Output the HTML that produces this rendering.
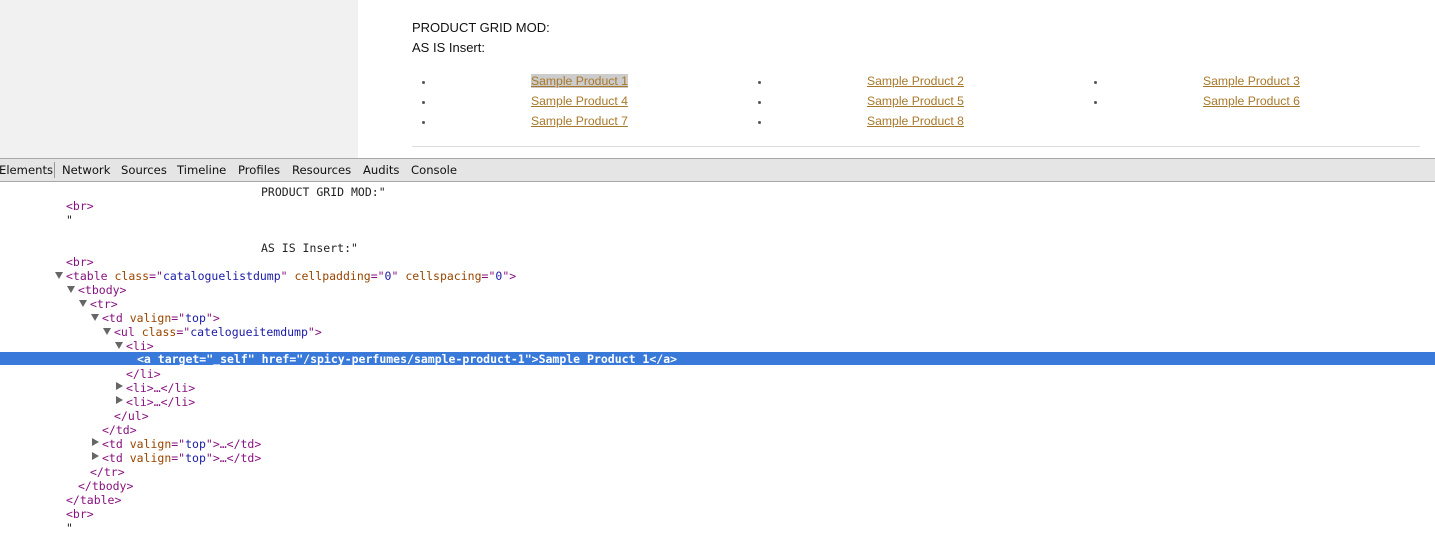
<!DOCTYPE html>
<html><head><meta charset="utf-8"><style>
*{margin:0;padding:0;box-sizing:border-box}
body{width:1435px;height:540px;overflow:hidden;background:#fff;position:relative;font-family:"Liberation Sans",Arial,sans-serif}
#left{position:absolute;left:0;top:0;width:358px;height:158px;background:#f1f1f1}
.t{position:absolute;font-size:13px;color:#111;left:412px}
.b{position:absolute;width:3px;height:3px;border-radius:50%;background:#555}
.l{position:absolute;font-size:12.2px;color:#a8782a;text-decoration:underline;white-space:nowrap}
#hr{position:absolute;left:412px;top:146px;width:1008px;height:1px;background:#ddd}
#tb{position:absolute;left:0;top:158px;width:1435px;height:24px;background:#e5e5e5;border-top:1px solid #a8a8a8;border-bottom:1px solid #a8a8a8;color:#111}
#tb span{position:absolute;top:4px;font-family:"DejaVu Sans",sans-serif;font-size:11.6px}
.c{position:absolute;font-family:"DejaVu Sans Mono","Liberation Mono",monospace;font-size:11.5px;line-height:14px;height:14px;white-space:pre;color:#881280}
.k{color:#994500}.v{color:#1a1aa6}.x{color:#222}
.tri{position:absolute;width:0;height:0}
.dn{border-left:4px solid transparent;border-right:4px solid transparent;border-top:7px solid #666}
.rt{border-top:4px solid transparent;border-bottom:4px solid transparent;border-left:7px solid #666}
#hl{position:absolute;left:0;top:352px;width:1435px;height:13px;background:#3879d9}
#code{position:absolute;left:0;top:1px;width:1435px;height:540px}
</style></head><body>
<div id="left"></div>
<div class="t" style="top:20px">PRODUCT GRID MOD:</div>
<div class="t" style="top:40px">AS IS Insert:</div>
<div class="b" style="left:422px;top:81px"></div><div class="b" style="left:422px;top:101px"></div><div class="b" style="left:422px;top:121px"></div>
<div class="b" style="left:758px;top:81px"></div><div class="b" style="left:758px;top:101px"></div><div class="b" style="left:758px;top:121px"></div>
<div class="b" style="left:1094px;top:81px"></div><div class="b" style="left:1094px;top:101px"></div>
<div class="l" style="left:531px;top:74px;background:#ccc">Sample Product 1</div>
<div class="l" style="left:531px;top:94px">Sample Product 4</div>
<div class="l" style="left:531px;top:114px">Sample Product 7</div>
<div class="l" style="left:867px;top:74px">Sample Product 2</div>
<div class="l" style="left:867px;top:94px">Sample Product 5</div>
<div class="l" style="left:867px;top:114px">Sample Product 8</div>
<div class="l" style="left:1203px;top:74px">Sample Product 3</div>
<div class="l" style="left:1203px;top:94px">Sample Product 6</div>
<div id="hr"></div>
<div id="tb">
<span style="left:-1px">Elements</span><span style="left:54px;top:3px;width:1px;height:16px;background:#999"></span>
<span style="left:62px">Network</span><span style="left:121px">Sources</span><span style="left:177px">Timeline</span><span style="left:238px">Profiles</span><span style="left:292px">Resources</span><span style="left:363px">Audits</span><span style="left:411px">Console</span>
</div>
<div id="hl"></div>
<div id="code">
<div class="c x" style="left:261px;top:184px">PRODUCT GRID MOD:"</div>
<div class="c" style="left:66px;top:198px">&lt;br&gt;</div>
<div class="c x" style="left:66px;top:212px">"</div>
<div class="c x" style="left:261px;top:240px">AS IS Insert:"</div>
<div class="c" style="left:66px;top:254px">&lt;br&gt;</div>
<div class="tri dn" style="left:55px;top:271px"></div>
<div class="c" style="left:66px;top:268px">&lt;table <span class="k">class</span>="<span class="v">cataloguelistdump</span>" <span class="k">cellpadding</span>="<span class="v">0</span>" <span class="k">cellspacing</span>="<span class="v">0</span>"&gt;</div>
<div class="tri dn" style="left:67px;top:285px"></div>
<div class="c" style="left:78px;top:282px">&lt;tbody&gt;</div>
<div class="tri dn" style="left:79px;top:299px"></div>
<div class="c" style="left:90px;top:296px">&lt;tr&gt;</div>
<div class="tri dn" style="left:91px;top:313px"></div>
<div class="c" style="left:102px;top:310px">&lt;td <span class="k">valign</span>="<span class="v">top</span>"&gt;</div>
<div class="tri dn" style="left:103px;top:327px"></div>
<div class="c" style="left:114px;top:324px">&lt;ul <span class="k">class</span>="<span class="v">catelogueitemdump</span>"&gt;</div>
<div class="tri dn" style="left:115px;top:341px"></div>
<div class="c" style="left:126px;top:338px">&lt;li&gt;</div>
<div class="c" style="left:137px;top:351px;color:#fff;font-weight:bold">&lt;a target="_self" href="/spicy-perfumes/sample-product-1"&gt;Sample Product 1&lt;/a&gt;</div>
<div class="c" style="left:126px;top:366px">&lt;/li&gt;</div>
<div class="tri rt" style="left:116px;top:381px"></div>
<div class="c" style="left:126px;top:380px">&lt;li&gt;…&lt;/li&gt;</div>
<div class="tri rt" style="left:116px;top:395px"></div>
<div class="c" style="left:126px;top:394px">&lt;li&gt;…&lt;/li&gt;</div>
<div class="c" style="left:114px;top:408px">&lt;/ul&gt;</div>
<div class="c" style="left:102px;top:422px">&lt;/td&gt;</div>
<div class="tri rt" style="left:92px;top:437px"></div>
<div class="c" style="left:102px;top:436px">&lt;td <span class="k">valign</span>="<span class="v">top</span>"&gt;…&lt;/td&gt;</div>
<div class="tri rt" style="left:92px;top:451px"></div>
<div class="c" style="left:102px;top:450px">&lt;td <span class="k">valign</span>="<span class="v">top</span>"&gt;…&lt;/td&gt;</div>
<div class="c" style="left:90px;top:464px">&lt;/tr&gt;</div>
<div class="c" style="left:78px;top:478px">&lt;/tbody&gt;</div>
<div class="c" style="left:66px;top:492px">&lt;/table&gt;</div>
<div class="c" style="left:66px;top:506px">&lt;br&gt;</div>
<div class="c x" style="left:66px;top:520px">"</div>
</div>
</body></html>
